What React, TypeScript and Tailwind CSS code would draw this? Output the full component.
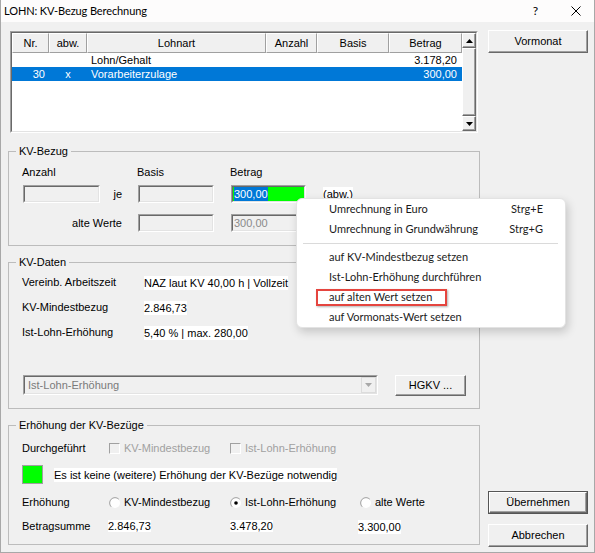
import React from "react";

const sunkenOuter = "border border-[#a0a0a0] border-b-white border-r-white";
const sunkenInner = "border border-[#696969] border-b-[#e3e3e3] border-r-[#e3e3e3]";
const raised =
  "border border-t-white border-l-white border-b-[#696969] border-r-[#696969] shadow-[inset_-1px_-1px_0_#a0a0a0]";

function Field({ w, bg = "bg-[#f0f0f0]", children }: { w: string; bg?: string; children?: React.ReactNode }) {
  return (
    <div className={`h-[18px] ${w} ${sunkenOuter}`}>
      <div className={`flex h-full items-center pl-[1px] ${bg} ${sunkenInner}`}>{children}</div>
    </div>
  );
}

function Button({ className, children }: { className: string; children: React.ReactNode }) {
  return (
    <div className={`flex items-center justify-center bg-[#f0f0f0] ${raised} ${className}`}>{children}</div>
  );
}

function Check({ label }: { label: string }) {
  return (
    <div className="flex items-center">
      <div className={`mr-[4px] h-[11px] w-[11px] bg-[#f0f0f0] ${sunkenOuter}`} />
      <span className="text-[#a0a0a0]">{label}</span>
    </div>
  );
}

function Radio({ label, checked = false }: { label: string; checked?: boolean }) {
  return (
    <div className="flex items-center">
      <svg width="12" height="12" viewBox="0 0 12 12" className="mr-[3px]">
        <circle cx="6" cy="6" r="5" fill="#fff" />
        <path d="M2.2 9.8 A5.3 5.3 0 0 1 9.8 2.2" fill="none" stroke="#a0a0a0" strokeWidth="1" />
        {checked && <circle cx="6" cy="6" r="1.8" fill="#000" />}
      </svg>
      <span>{label}</span>
    </div>
  );
}

function Arrow({ up = false, color = "#000" }: { up?: boolean; color?: string }) {
  return (
    <svg width="7" height="4" viewBox="0 0 7 4">
      <polygon points={up ? "3.5,0 7,4 0,4" : "0,0 7,0 3.5,4"} fill={color} />
    </svg>
  );
}

function Group({ title, className, children }: { title: string; className: string; children: React.ReactNode }) {
  return (
    <fieldset className={`border border-[#bcbcbc] ${className}`}>
      <legend className="ml-[7px] px-[3px] leading-[13px]">{title}</legend>
      {children}
    </fieldset>
  );
}

function MenuItem({ label, shortcut }: { label: string; shortcut?: string }) {
  return (
    <div className="flex h-[20px] items-center whitespace-nowrap pl-[32px] pr-[22px]">
      <span>{label}</span>
      {shortcut && <span className="ml-auto">{shortcut}</span>}
    </div>
  );
}

const headers = [
  { label: "Nr.", w: "w-[37px]" },
  { label: "abw.", w: "w-[38px]" },
  { label: "Lohnart", w: "w-[179px]" },
  { label: "Anzahl", w: "w-[51px]" },
  { label: "Basis", w: "w-[72px]" },
  { label: "Betrag", w: "w-[73px]" },
];

function ListView() {
  return (
    <div className={`ml-[2px] h-[102px] w-[468px] ${sunkenOuter}`}>
      <div className={`flex h-full bg-white ${sunkenInner}`}>
        <div className="w-[450px]">
          <div className="flex h-[20px]">
            {headers.map((h) => (
              <div
                key={h.label}
                className={`flex items-center justify-center border border-t-white border-l-white border-b-[#a0a0a0] border-r-[#a0a0a0] bg-[#f0f0f0] ${h.w}`}
              >
                {h.label}
              </div>
            ))}
          </div>
          <div className="flex h-[14px] leading-[14px]">
            <div className="w-[37px]" />
            <div className="w-[38px]" />
            <div className="w-[179px] pl-[4px]">Lohn/Gehalt</div>
            <div className="w-[51px]" />
            <div className="w-[72px]" />
            <div className="w-[73px] pr-[5px] text-right">3.178,20</div>
          </div>
          <div className="flex h-[14px] bg-[#0078d7] leading-[14px] text-white">
            <div className="w-[37px] pr-[4px] text-right">30</div>
            <div className="w-[38px] text-center">x</div>
            <div className="w-[179px] pl-[4px]">Vorarbeiterzulage</div>
            <div className="w-[51px]" />
            <div className="w-[72px]" />
            <div className="w-[73px] pr-[5px] text-right">300,00</div>
          </div>
        </div>
        <div className="flex w-[14px] flex-col bg-[#f0f0f0]">
          <div className={`flex h-[15px] items-center justify-center ${raised}`}>
            <Arrow up />
          </div>
          <div className={`flex-1 ${raised}`} />
          <div className={`flex h-[15px] items-center justify-center ${raised}`}>
            <Arrow />
          </div>
        </div>
      </div>
    </div>
  );
}

export default function App() {
  return (
    <div className="relative h-[553px] w-[595px] overflow-hidden border-x border-b border-[#a8a8a8] bg-[#f0f0f0] font-['Liberation_Sans',Arial,sans-serif] text-[11px] text-black">
      <div className="flex h-[22px] items-center bg-[#fdfcfc] pl-[3px] font-['Lato',sans-serif] text-[11px]">
        <span className="whitespace-nowrap tracking-[-0.1px]">LOHN: KV-Bezug Berechnung</span>
        <span className="ml-auto text-[12px]">?</span>
        <svg width="10" height="10" viewBox="0 0 10 10" className="ml-[33px] mr-[13px]">
          <path d="M0.5 0.5 L9.5 9.5 M9.5 0.5 L0.5 9.5" stroke="#000" strokeWidth="1" />
        </svg>
      </div>

      <div className="flex h-[530px]">
        <div className="ml-[7px] flex w-[472px] flex-col pt-[9px]">
          <ListView />

          <Group title="KV-Bezug" className="mt-[12px] h-[101px]">
            <div className="mt-[8px] flex h-[13px] items-center pl-[13px]">
              <span className="w-[115px]">Anzahl</span>
              <span className="w-[93px]">Basis</span>
              <span>Betrag</span>
            </div>
            <div className="mt-[6px] flex h-[18px] items-center pl-[14px]">
              <Field w="w-[77px]" />
              <span className="w-[38px] pr-[16px] text-right">je</span>
              <Field w="w-[76px]" />
              <div className="ml-[17px]">
                <Field w="w-[75px]" bg="bg-[#00ff00]">
                  <span className="bg-[#0078d7] leading-[14px] text-white">300,00</span>
                </Field>
              </div>
              <span className="ml-[17px] bg-white leading-[14px]">(abw.)</span>
            </div>
            <div className="mt-[11px] flex h-[18px] items-center pl-[14px]">
              <span className="w-[115px] pr-[16px] text-right">alte Werte</span>
              <Field w="w-[76px]" />
              <div className="ml-[17px]">
                <Field w="w-[75px]">
                  <span className="text-[#8a8a8a]">300,00</span>
                </Field>
              </div>
            </div>
          </Group>

          <Group title="KV-Daten" className="mt-[10px] h-[153px]">
            <div className="mt-[7px] flex h-[13px] items-center pl-[13px]">
              <span className="w-[122px]">Vereinb. Arbeitszeit</span>
              <span className="bg-white leading-[14px]">NAZ laut KV 40,00 h | Vollzeit</span>
            </div>
            <div className="mt-[12px] flex h-[13px] items-center pl-[13px]">
              <span className="w-[122px]">KV-Mindestbezug</span>
              <span className="bg-white leading-[14px]">2.846,73</span>
            </div>
            <div className="mt-[12px] flex h-[13px] items-center pl-[13px]">
              <span className="w-[122px]">Ist-Lohn-Erhöhung</span>
              <span className="bg-white leading-[14px]">5,40 % | max. 280,00</span>
            </div>
            <div className="mt-[36px] flex h-[21px] items-start pl-[14px]">
              <div className={`h-[20px] w-[355px] ${sunkenOuter}`}>
                <div className={`flex h-full items-center bg-[#f0f0f0] ${sunkenInner}`}>
                  <span className="pl-[3px] text-[#7a7a7a]">Ist-Lohn-Erhöhung</span>
                  <div className="ml-auto flex h-full w-[15px] items-center justify-center border border-[#dcdcdc] bg-[#f0f0f0]">
                    <Arrow color="#a8a8a8" />
                  </div>
                </div>
              </div>
              <Button className="ml-[17px] h-[21px] w-[71px]">HGKV ...</Button>
            </div>
          </Group>

          <Group title="Erhöhung der KV-Bezüge" className="mt-[10px] h-[126px]">
            <div className="mt-[10px] flex h-[13px] items-center pl-[13px]">
              <span className="w-[87px]">Durchgeführt</span>
              <div className="w-[121px]">
                <Check label="KV-Mindestbezug" />
              </div>
              <Check label="Ist-Lohn-Erhöhung" />
            </div>
            <div className="mt-[10px] flex h-[19px] items-center pl-[13px]">
              <div className="h-[19px] w-[21px] border border-[#a0a0a0] bg-[#00ff00]" />
              <span className="ml-[11px] bg-white leading-[14px]">
                Es ist keine (weitere) Erhöhung der KV-Bezüge notwendig
              </span>
            </div>
            <div className="mt-[12px] flex h-[13px] items-center pl-[13px]">
              <span className="w-[87px]">Erhöhung</span>
              <div className="w-[121px]">
                <Radio label="KV-Mindestbezug" />
              </div>
              <div className="w-[130px]">
                <Radio label="Ist-Lohn-Erhöhung" checked />
              </div>
              <Radio label="alte Werte" />
            </div>
            <div className="mt-[11px] flex h-[13px] items-center pl-[13px]">
              <span className="w-[86px]">Betragsumme</span>
              <div className="w-[122px]">
                <span className="bg-white leading-[14px]">2.846,73</span>
              </div>
              <div className="w-[128px]">
                <span className="bg-white leading-[14px]">3.478,20</span>
              </div>
              <span className="bg-white leading-[14px]">3.300,00</span>
            </div>
          </Group>
        </div>

        <div className="ml-[8px] flex w-[100px] flex-col pb-[5px] pt-[8px]">
          <Button className="h-[23px]">Vormonat</Button>
          <div className="mt-auto border border-[#555]">
            <Button className="h-[21px]">Übernehmen</Button>
          </div>
          <Button className="mt-[10px] h-[23px]">Abbrechen</Button>
        </div>
      </div>

      <div className="absolute left-[295px] top-[198px] w-[270px] rounded-[6px] border border-[#e3e3e3] bg-white font-['Lato',sans-serif] text-[11px] text-[#1b1b1b] shadow-[2px_4px_10px_rgba(0,0,0,0.18)]">
        <MenuItem label="Umrechnung in Euro" shortcut="Strg+E" />
        <MenuItem label="Umrechnung in Grundwährung" shortcut="Strg+G" />
        <div className="flex h-[8px] items-center pl-[6px] pr-[7px]">
          <div className="h-px w-full bg-[#dadada]" />
        </div>
        <MenuItem label="auf KV-Mindestbezug setzen" />
        <MenuItem label="Ist-Lohn-Erhöhung durchführen" />
        <MenuItem label="auf alten Wert setzen" />
        <MenuItem label="auf Vormonats-Wert setzen" />
        <div className="absolute left-[19px] top-[90px] h-[17px] w-[131px] border-2 border-[#e5453f] shadow-[1px_1px_2px_rgba(0,0,0,0.3)]" />
      </div>
    </div>
  );
}
